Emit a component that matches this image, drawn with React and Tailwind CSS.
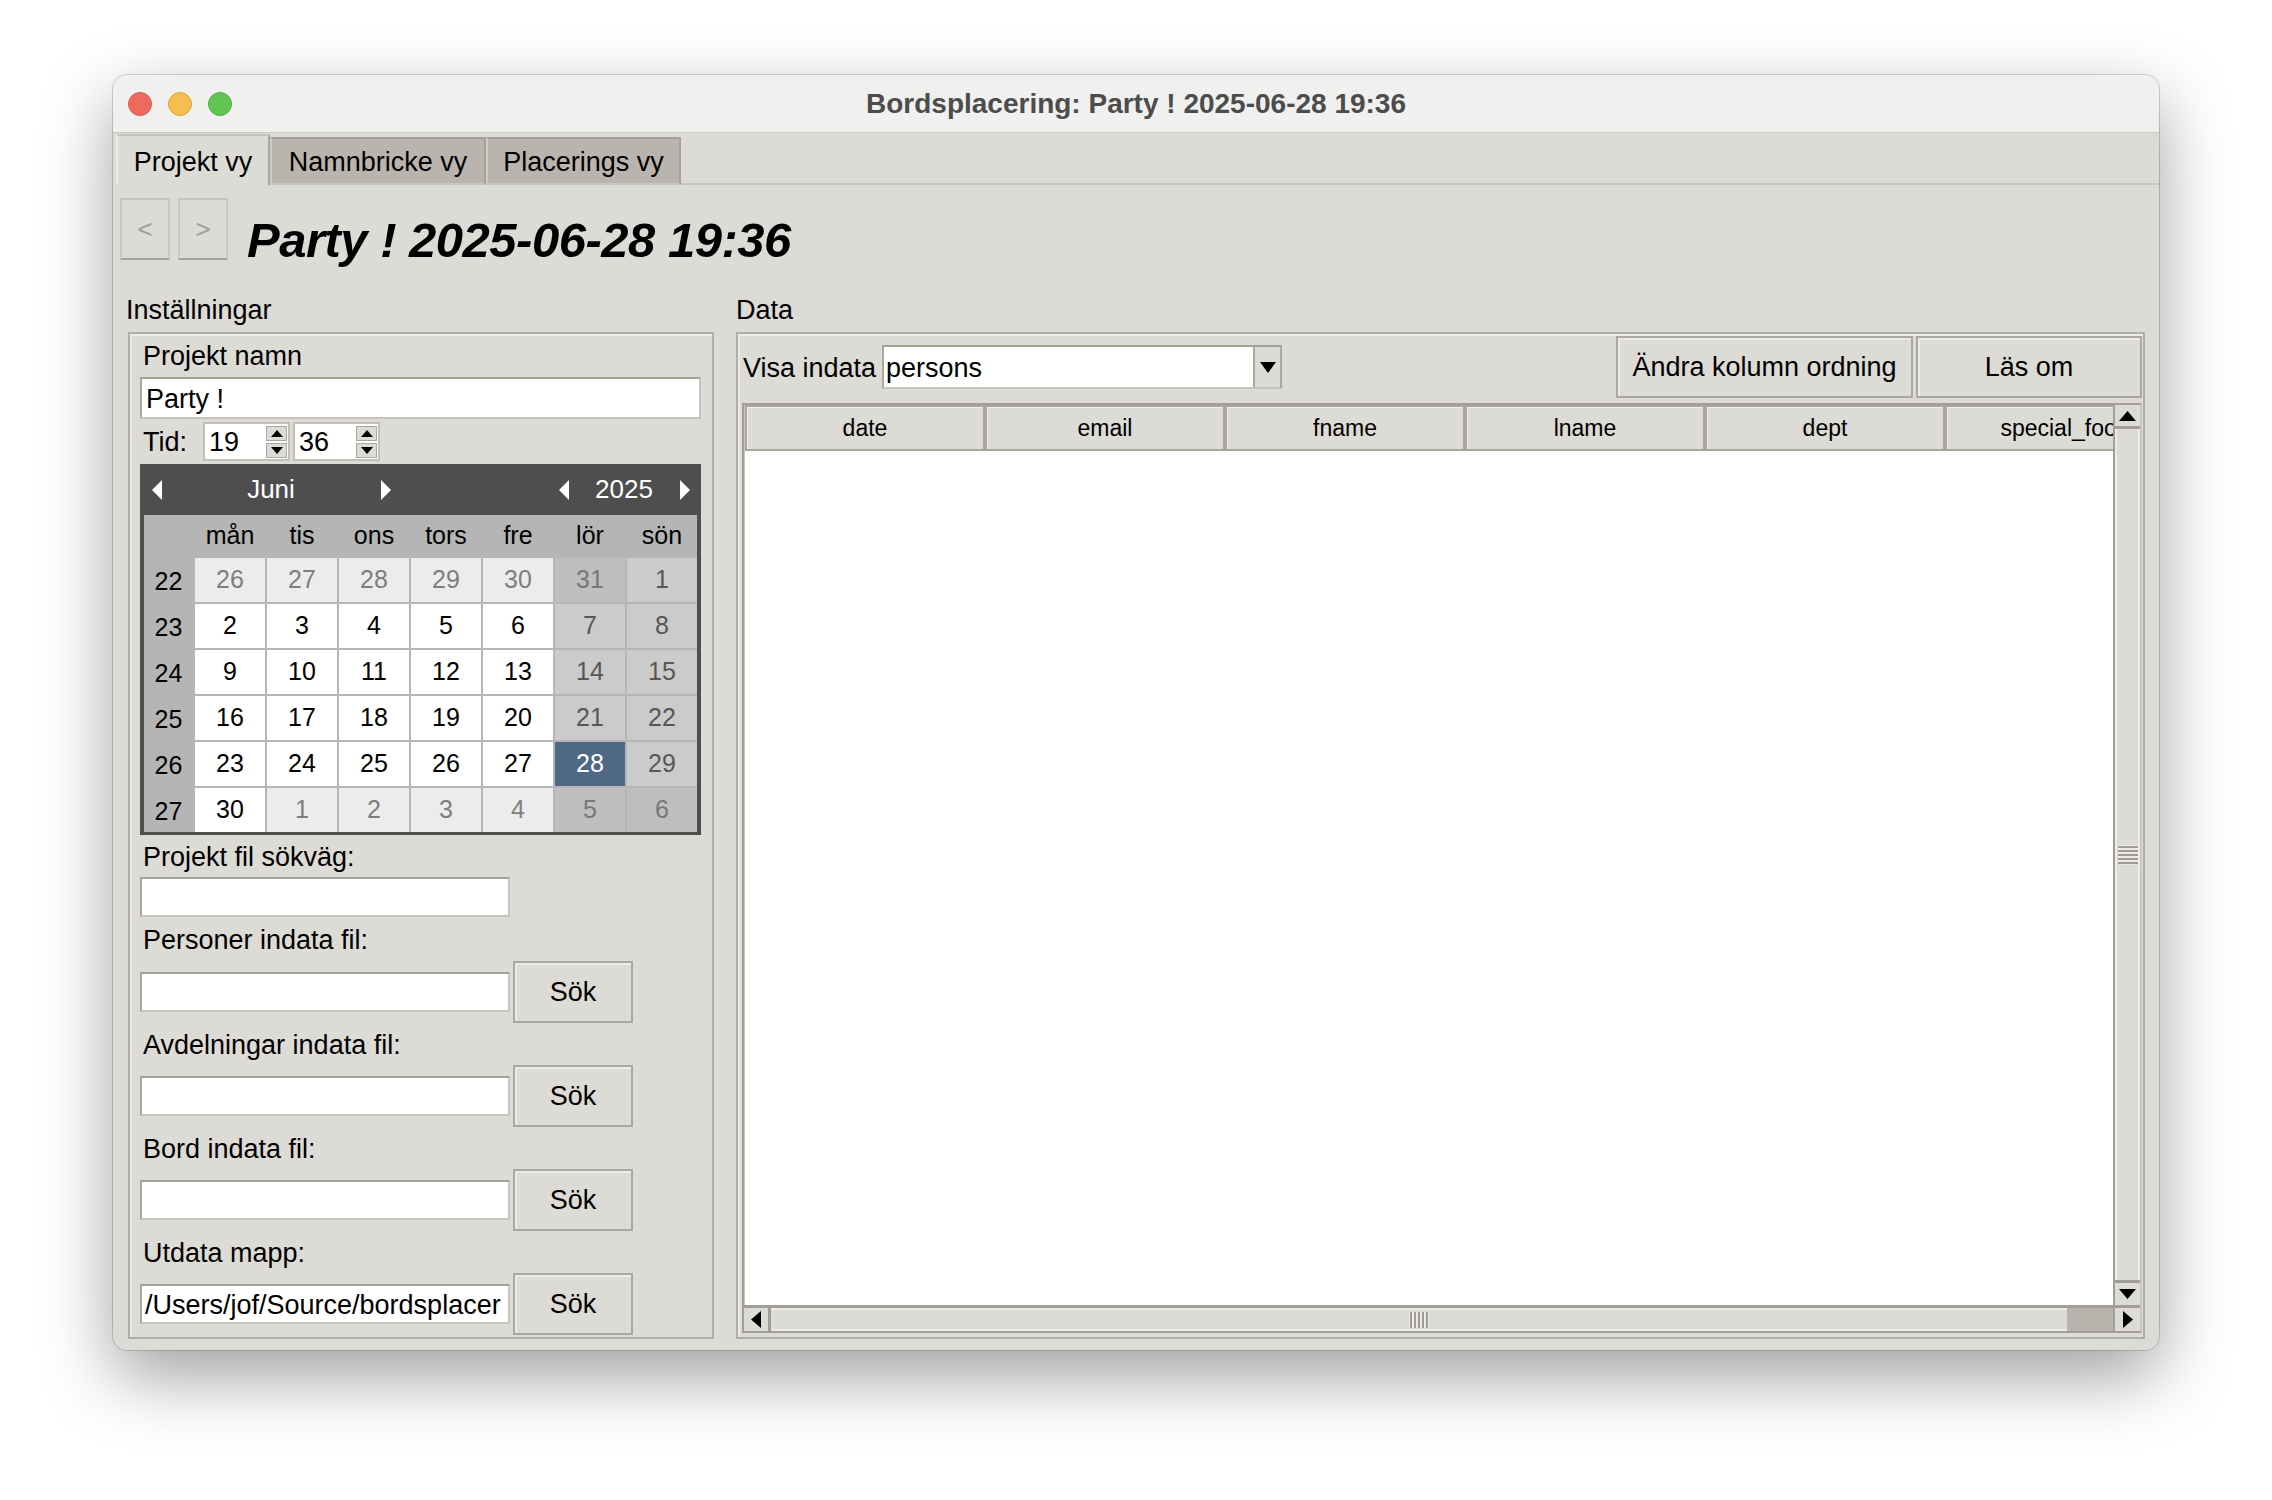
import React from "react";

const Tri = ({ dir, w, h, fill = "#000" }) => {
  const pts = {
    up: `0,${h} ${w / 2},0 ${w},${h}`,
    down: `0,0 ${w},0 ${w / 2},${h}`,
    left: `${w},0 ${w},${h} 0,${h / 2}`,
    right: `0,0 ${w},${h / 2} 0,${h}`,
  }[dir];
  return (
    <svg width={w} height={h} viewBox={`0 0 ${w} ${h}`} className="block">
      <polygon points={pts} fill={fill} />
    </svg>
  );
};

const Entry = ({ className = "", children }) => (
  <div
    className={`bg-white border-2 border-t-[#a3a19a] border-l-[#a9a79f] border-b-[#c6c4bd] border-r-[#c6c4bd] flex items-center pl-[3px] pt-[2px] overflow-hidden whitespace-nowrap text-[27px] ${className}`}
  >
    {children}
  </div>
);

const TkButton = ({ className = "", children }) => (
  <div
    className={`flex items-center justify-center bg-[#dddbd6] border-2 border-[#aaa8a1] shadow-[inset_2px_2px_0_#eceae6] text-[27px] whitespace-nowrap ${className}`}
  >
    {children}
  </div>
);

const NavButton = ({ className = "", children }) => (
  <div
    className={`w-[50px] h-[62px] flex items-center justify-center bg-[#dcdbd6] border-2 border-t-[#c4c2bb] border-x-[#cbc9c2] border-b-[#a4a29b] text-[26px] text-[#9d9d9d] ${className}`}
  >
    {children}
  </div>
);

const Spin = ({ value }) => (
  <div className="w-[87px] h-[39px] bg-white border-2 border-[#c1bfb8] flex items-center">
    <span className="flex-1 pl-[4px] pt-[2px] text-[27px] leading-none">{value}</span>
    <div className="w-[21px] h-full flex flex-col justify-center gap-[2px] mr-[1px]">
      <div className="h-[15px] flex items-center justify-center bg-[#dcdbd6] border border-[#a9a79f]">
        <Tri dir="up" w={12} h={7} />
      </div>
      <div className="h-[15px] flex items-center justify-center bg-[#dcdbd6] border border-[#a9a79f]">
        <Tri dir="down" w={12} h={7} />
      </div>
    </div>
  </div>
);

const weeks = [
  { wk: 22, days: [[26, 0], [27, 0], [28, 0], [29, 0], [30, 0], [31, 0], [1, 1]] },
  { wk: 23, days: [[2, 1], [3, 1], [4, 1], [5, 1], [6, 1], [7, 1], [8, 1]] },
  { wk: 24, days: [[9, 1], [10, 1], [11, 1], [12, 1], [13, 1], [14, 1], [15, 1]] },
  { wk: 25, days: [[16, 1], [17, 1], [18, 1], [19, 1], [20, 1], [21, 1], [22, 1]] },
  { wk: 26, days: [[23, 1], [24, 1], [25, 1], [26, 1], [27, 1], [28, 1], [29, 1]] },
  { wk: 27, days: [[30, 1], [1, 0], [2, 0], [3, 0], [4, 0], [5, 0], [6, 0]] },
];

const cellClass = (day, inMonth, col) => {
  const weekend = col >= 5;
  if (inMonth && day === 28) return "bg-[#4f6886] text-white";
  if (inMonth && !weekend) return "bg-white text-black";
  if (inMonth && weekend) return "bg-[#cbcbcb] text-[#575757]";
  if (!weekend) return "bg-[#ececec] text-[#7e7e7e]";
  return "bg-[#bebebe] text-[#777777]";
};

const Calendar = () => (
  <div className="ml-[10px] w-[561px] h-[371px] bg-[#4e4e4e] px-[4px] pb-[3px] flex flex-col">
    <div className="h-[51px] flex items-center text-white text-[26px]">
      <div className="w-[7px]" />
      <div className="w-[11px] flex justify-center"><Tri dir="left" w={10} h={20} fill="#fff" /></div>
      <div className="w-[218px] text-center">Juni</div>
      <div className="w-[11px] flex justify-center"><Tri dir="right" w={10} h={20} fill="#fff" /></div>
      <div className="flex-1" />
      <div className="w-[11px] flex justify-center"><Tri dir="left" w={10} h={20} fill="#fff" /></div>
      <div className="w-[110px] text-center">2025</div>
      <div className="w-[11px] flex justify-center"><Tri dir="right" w={10} h={20} fill="#fff" /></div>
      <div className="w-[7px]" />
    </div>
    <div className="grid grid-cols-[49px_repeat(7,70px)] grid-rows-[41px_repeat(6,44px)] gap-[2px] bg-[#b5b5b5]">
      <div />
      {["mån", "tis", "ons", "tors", "fre", "lör", "sön"].map((d) => (
        <div key={d} className="flex items-center justify-center text-[25px] text-black">
          {d}
        </div>
      ))}
      {weeks.map((w) => (
        <React.Fragment key={w.wk}>
          <div className="flex items-center justify-center pt-[4px] text-[25px] text-black">{w.wk}</div>
          {w.days.map(([d, m], i) => (
            <div
              key={i}
              className={`flex items-center justify-center text-[25px] ${cellClass(d, m, i)}`}
            >
              {d}
            </div>
          ))}
        </React.Fragment>
      ))}
    </div>
  </div>
);

const FileRow = ({ value }) => (
  <div className="h-[62px] flex items-center ml-[10px]">
    <Entry className="w-[370px] h-[40px]">{value}</Entry>
    <TkButton className="ml-[3px] w-[120px] h-[62px]">Sök</TkButton>
  </div>
);

const Label = ({ h, children }) => (
  <div className={`${h} flex items-center pl-[13px] pt-[3px] text-[27px]`}>{children}</div>
);

const columns = ["date", "email", "fname", "lname", "dept", "special_food"];

export default function App() {
  return (
    <div className="w-[2272px] h-[1500px] bg-white pt-[75px] pl-[113px] font-['Liberation_Sans',Arial,sans-serif] text-black">
      <div className="w-[2046px] h-[1275px] rounded-[14px] overflow-hidden bg-[#dcdbd6] shadow-[0_0_0_1px_rgba(0,0,0,0.16),0_26px_70px_rgba(0,0,0,0.38)] flex flex-col">
        {/* title bar */}
        <div className="h-[58px] shrink-0 bg-[#f0f0ef] border-b border-[#c9c9c7] flex items-center">
          <div className="w-[130px] flex gap-[16px] pl-[15px]">
            <div className="w-[24px] h-[24px] rounded-full bg-[#ee6a5f] border border-[#d85a50]" />
            <div className="w-[24px] h-[24px] rounded-full bg-[#f5be4f] border border-[#dca53d]" />
            <div className="w-[24px] h-[24px] rounded-full bg-[#61c554] border border-[#50ad45]" />
          </div>
          <div className="flex-1 text-center text-[28px] font-bold text-[#4c4c4c]">
            Bordsplacering: Party ! 2025-06-28 19:36
          </div>
          <div className="w-[130px]" />
        </div>

        {/* tabs */}
        <div className="h-[52px] shrink-0 flex items-end pl-[3px]">
          <div className="h-[51px] w-[154px] flex items-center justify-center pt-[4px] bg-[#dcdbd6] border-t-2 border-l-2 border-r-2 border-t-[#c5c3bc] border-l-[#ecebe7] border-r-[#a9a79f] text-[27px]">
            Projekt vy
          </div>
          <div className="h-[48px] w-[216px] flex items-center justify-center pt-[2px] bg-[#b9b5ae] border-2 border-t-[#a4a19a] border-l-[#cfccc5] border-r-[#a4a19a] border-b-[#c8c6bf] text-[27px]">
            Namnbricke vy
          </div>
          <div className="h-[48px] w-[195px] flex items-center justify-center pt-[2px] bg-[#b9b5ae] border-2 border-t-[#a4a19a] border-l-[#cfccc5] border-r-[#a4a19a] border-b-[#c8c6bf] text-[27px]">
            Placerings vy
          </div>
          <div className="flex-1 h-[2px] bg-[#c8c6bf]" />
        </div>

        {/* content */}
        <div className="flex-1 pl-[7px] pr-[13px]">
          <div className="mt-[13px] h-[62px] flex items-center">
            <NavButton>&lt;</NavButton>
            <NavButton className="ml-[8px]">&gt;</NavButton>
            <h1 className="ml-[19px] text-[49px] font-bold italic tracking-[-0.5px] leading-none pt-[22px]">
              Party ! 2025-06-28 19:36
            </h1>
          </div>

          <div className="flex">
            {/* left column */}
            <div className="ml-[6px] w-[588px]">
              <div className="pt-[34px] h-[65px] leading-[32px] text-[27px]">Inställningar</div>
              <div className="mt-[7px] ml-[2px] w-[586px] h-[1007px] border-2 border-[#b0aea7] shadow-[inset_2px_2px_0_#ecebe7]">
                <Label h="h-[42px]">Projekt namn</Label>
                <Entry className="mt-px ml-[10px] w-[561px] h-[42px] pl-[4px]">Party !</Entry>
                <div className="h-[45px] flex items-center">
                  <div className="w-[73px] pl-[13px] pt-[2px] text-[27px]">Tid:</div>
                  <Spin value="19" />
                  <div className="w-[3px]" />
                  <Spin value="36" />
                </div>
                <Calendar />
                <Label h="h-[42px]">Projekt fil sökväg:</Label>
                <Entry className="ml-[10px] w-[370px] h-[40px]" />
                <Label h="h-[44px]">Personer indata fil:</Label>
                <FileRow />
                <Label h="h-[42px]">Avdelningar indata fil:</Label>
                <FileRow />
                <Label h="h-[42px]">Bord indata fil:</Label>
                <FileRow />
                <Label h="h-[42px]">Utdata mapp:</Label>
                <FileRow value="/Users/jof/Source/bordsplacer" />
              </div>
            </div>

            {/* right column */}
            <div className="ml-[22px] w-[1409px]">
              <div className="pt-[34px] h-[65px] leading-[32px] text-[27px]">Data</div>
              <div className="mt-[7px] w-[1409px] h-[1007px] border-2 border-[#b0aea7] shadow-[inset_2px_2px_0_#ecebe7] flex flex-col">
                <div className="h-[66px] shrink-0 flex items-center pl-[5px] pr-[1px]">
                  <div className="w-[139px] pt-[2px] text-[27px]">Visa indata</div>
                  <div className="w-[400px] h-[44px] flex bg-white border-2 border-t-[#a3a19a] border-l-[#a9a79f] border-b-[#c6c4bd] border-r-[#a9a79f]">
                    <div className="flex-1 flex items-center pl-[2px] pt-[2px] text-[27px]">persons</div>
                    <div className="w-[27px] flex items-center justify-center bg-[#dcdbd6] border-l-2 border-[#a9a79f]">
                      <Tri dir="down" w={16} h={11} />
                    </div>
                  </div>
                  <div className="flex-1" />
                  <TkButton className="w-[297px] h-[62px]">Ändra kolumn ordning</TkButton>
                  <TkButton className="ml-[3px] w-[226px] h-[62px]">Läs om</TkButton>
                </div>

                {/* table */}
                <div className="ml-[4px] mt-[3px] w-[1400px] h-[930px] border-2 border-t-[#a09e97] border-l-[#a09e97] border-b-[#a09e97] border-r-[#c7c5be] flex flex-col">
                  <div className="flex-1 flex min-h-0">
                    <div className="flex-1 flex flex-col min-w-0 bg-white border-l border-[#c7c5be]">
                      <div className="h-[46px] shrink-0 flex overflow-hidden bg-[#dcdbd6]">
                        {columns.map((c) => (
                          <div
                            key={c}
                            className="w-[240px] shrink-0 flex items-center justify-center border-2 border-[#a8a69f] shadow-[inset_1px_1px_0_#efeeea] text-[23px] whitespace-nowrap overflow-hidden"
                          >
                            {c}
                          </div>
                        ))}
                      </div>
                      <div className="flex-1" />
                    </div>
                    {/* vertical scrollbar */}
                    <div className="w-[27px] shrink-0 flex flex-col bg-[#dcdbd6] border-l-2 border-[#a09e97]">
                      <div className="h-[24px] shrink-0 flex items-center justify-center border-b-[3px] border-[#a09e97]">
                        <Tri dir="up" w={17} h={10} />
                      </div>
                      <div className="flex-1 flex items-center justify-center border-x-2 border-[#ecebe7]">
                        <div className="flex flex-col gap-[2px] py-[1px] bg-[#ecebe7]">
                          {[0, 1, 2, 3, 4].map((i) => (
                            <div key={i} className="w-[20px] h-[2px] bg-[#9e9c95]" />
                          ))}
                        </div>
                      </div>
                      <div className="h-[25px] shrink-0 flex items-center justify-center border-t-[3px] border-[#a09e97]">
                        <Tri dir="down" w={17} h={10} />
                      </div>
                    </div>
                  </div>
                  {/* horizontal scrollbar */}
                  <div className="h-[26px] shrink-0 flex bg-[#dcdbd6] border-t-[3px] border-[#a09e97]">
                    <div className="w-[27px] flex items-center justify-center border-r-[3px] border-[#a09e97]">
                      <Tri dir="left" w={10} h={17} />
                    </div>
                    <div className="w-[1296px] flex items-center justify-center border-y-2 border-[#ecebe7]">
                      <div className="flex gap-[2px] px-[1px] bg-[#ecebe7]">
                        {[0, 1, 2, 3, 4].map((i) => (
                          <div key={i} className="w-[2px] h-[16px] bg-[#9e9c95]" />
                        ))}
                      </div>
                    </div>
                    <div className="flex-1 bg-[#b8b4ad]" />
                    <div className="w-[27px] flex items-center justify-center border-l-2 border-[#a09e97]">
                      <Tri dir="right" w={10} h={17} />
                    </div>
                  </div>
                </div>
              </div>
            </div>
          </div>
        </div>
      </div>
    </div>
  );
}
